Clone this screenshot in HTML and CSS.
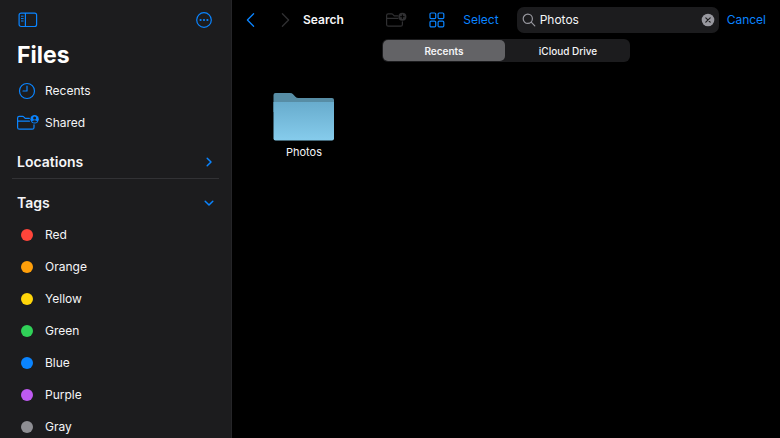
FILE: index.html
```html
<!DOCTYPE html>
<html lang="en">
<head>
<meta charset="utf-8">
<meta name="viewport" content="width=device-width, initial-scale=1">
<title>Files</title>
<link rel="stylesheet" href="styles.css">
</head>
<body>
<div class="app">
  <aside class="sidebar">
    <div class="sidebar-bar">
      <button class="icon-button" type="button" aria-label="Toggle sidebar">
        <svg width="20" height="16" viewBox="0 0 20 16" fill="none" stroke="currentColor" stroke-width="1.2"><rect x="1.1" y="1.1" width="17.5" height="13.4" rx="2"/><path d="M7.4 1v13.5"/><path d="M3 4.2h2.6M3 6.6h2.6M3 9h2.6" stroke-width="1"/></svg>
      </button>
      <button class="icon-button" type="button" aria-label="More">
        <svg width="16" height="16" viewBox="0 0 16 16" fill="none" stroke="currentColor" stroke-width="1.2"><circle cx="8" cy="8" r="7.3"/><g fill="currentColor" stroke="none"><circle cx="4.6" cy="8" r="1.1"/><circle cx="8" cy="8" r="1.1"/><circle cx="11.4" cy="8" r="1.1"/></g></svg>
      </button>
    </div>
    <h1 class="title">Files</h1>
    <nav class="places" aria-label="Places">
      <a class="row" href="#recents"><span class="row-icon">
        <svg width="18" height="18" viewBox="0 0 18 18" fill="none" stroke="currentColor" stroke-width="1.2" stroke-linecap="round" stroke-linejoin="round"><circle cx="9" cy="9" r="7.5"/><path d="M9 4.2V9H5"/></svg>
      </span>Recents</a>
      <a class="row" href="#shared"><span class="row-icon">
        <svg width="24" height="18" viewBox="0 0 24 18" fill="none" stroke="currentColor" stroke-width="1.2" stroke-linecap="round" stroke-linejoin="round"><path d="M14.4 4.3H10.2L8.8 2.8Q8.4 2.3 7.6 2.3H4.2Q2.6 2.3 2.6 3.9V13.4Q2.6 15.2 4.4 15.2H17.2Q19 15.2 19 13.4V10.8M2.6 7.2H14.4"/><circle cx="19.6" cy="5.3" r="4.2" fill="currentColor" stroke="none"/><g class="badge-cut" stroke="none"><circle cx="19.6" cy="4" r="1.5"/><path d="M17 7.7Q17.6 6.2 19.6 6.2T22.2 7.7Q21.2 8.6 19.6 8.6T17 7.7Z"/></g></svg>
      </span>Shared</a>
    </nav>
    <section class="locations">
      <button class="section-head" type="button" aria-expanded="false"><span>Locations</span>
        <svg width="12" height="12" viewBox="0 0 12 12" fill="none" stroke="currentColor" stroke-width="1.5" stroke-linecap="round" stroke-linejoin="round"><path d="M4.2 2.2 8 6 4.2 9.8"/></svg>
      </button>
    </section>
    <section class="tags">
      <button class="section-head" type="button" aria-expanded="true"><span>Tags</span>
        <svg width="12" height="12" viewBox="0 0 12 12" fill="none" stroke="currentColor" stroke-width="1.5" stroke-linecap="round" stroke-linejoin="round"><path d="M2.2 4.2 6 8l3.8-3.8"/></svg>
      </button>
      <nav aria-label="Tags">
        <a class="row" href="#red"><span class="row-icon"><i class="dot red"></i></span>Red</a>
        <a class="row" href="#orange"><span class="row-icon"><i class="dot orange"></i></span>Orange</a>
        <a class="row" href="#yellow"><span class="row-icon"><i class="dot yellow"></i></span>Yellow</a>
        <a class="row" href="#green"><span class="row-icon"><i class="dot green"></i></span>Green</a>
        <a class="row" href="#blue"><span class="row-icon"><i class="dot blue"></i></span>Blue</a>
        <a class="row" href="#purple"><span class="row-icon"><i class="dot purple"></i></span>Purple</a>
        <a class="row" href="#gray"><span class="row-icon"><i class="dot gray"></i></span>Gray</a>
      </nav>
    </section>
  </aside>
  <main class="content">
    <header class="toolbar">
      <div class="history">
        <button class="icon-button" type="button" aria-label="Back">
          <svg width="10" height="16" viewBox="0 0 10 16" fill="none" stroke="currentColor" stroke-width="1.3" stroke-linecap="round" stroke-linejoin="round"><path d="M7.6 1.8 1.4 8l6.2 6.2"/></svg>
        </button>
        <button class="icon-button" type="button" aria-label="Forward" disabled>
          <svg width="10" height="16" viewBox="0 0 10 16" fill="none" stroke="currentColor" stroke-width="1.3" stroke-linecap="round" stroke-linejoin="round"><path d="M2.4 1.8 8.6 8l-6.2 6.2"/></svg>
        </button>
      </div>
      <h2 class="page-title">Search</h2>
      <div class="actions">
        <div class="view-tools">
          <button class="icon-button" type="button" aria-label="New folder" disabled>
            <svg width="24" height="18" viewBox="0 0 24 18" fill="none" stroke="currentColor" stroke-width="1.2" stroke-linecap="round" stroke-linejoin="round"><path d="M13.8 4.8H10.2L8.8 3.4Q8.4 2.9 7.6 2.9H4.2Q2.6 2.9 2.6 4.5V13.4Q2.6 15.2 4.4 15.2H16.6Q18.4 15.2 18.4 13.4V10.8M2.6 7.4H13.8"/><circle cx="18.4" cy="5.7" r="4" fill="currentColor" stroke="none"/><path d="M18.4 3.9v3.6M16.6 5.7h3.6" stroke="#000" stroke-width="1"/></svg>
          </button>
          <button class="icon-button" type="button" aria-label="Icon view">
            <svg width="16" height="16" viewBox="0 0 16 16" fill="none" stroke="currentColor" stroke-width="1.2"><rect x="1" y="1" width="5.7" height="5.7" rx="1.1"/><rect x="9.1" y="1" width="5.7" height="5.7" rx="1.1"/><rect x="1" y="9.1" width="5.7" height="5.7" rx="1.1"/><rect x="9.1" y="9.1" width="5.7" height="5.7" rx="1.1"/></svg>
          </button>
        </div>
        <button class="text-button" type="button">Select</button>
      </div>
      <form class="search">
        <svg width="14" height="14" viewBox="0 0 14 14" fill="none" stroke="currentColor" stroke-width="1.2" stroke-linecap="round" aria-hidden="true"><circle cx="5.8" cy="5.8" r="4.6"/><path d="m9.2 9.2 3.6 3.6"/></svg>
        <input class="search-input" type="text" aria-label="Search" value="Photos">
        <button class="icon-button" type="reset" aria-label="Clear text">
          <svg width="14" height="14" viewBox="0 0 14 14"><circle cx="7" cy="7" r="6.3" fill="#98989f"/><path d="m4.8 4.8 4.4 4.4M9.2 4.8 4.8 9.2" stroke="#1c1c1e" stroke-width="1.2" stroke-linecap="round"/></svg>
        </button>
      </form>
      <button class="text-button" type="button">Cancel</button>
    </header>
    <div class="scope">
      <button class="segment selected" type="button" aria-pressed="true">Recents</button>
      <button class="segment" type="button" aria-pressed="false">iCloud Drive</button>
    </div>
    <div class="results">
      <a class="item" href="#photos">
        <svg width="62" height="50" viewBox="0 0 62 50" aria-hidden="true">
          <defs><linearGradient id="folder" x1="0" y1="0" x2="0" y2="1"><stop offset="0" stop-color="#68accd"/><stop offset="1" stop-color="#86ccec"/></linearGradient></defs>
          <path d="M.5 3Q.5 1 2.5 1H17Q19 1 20.3 2.4L22.4 4.7Q23.5 6 25.4 6H59Q61 6 61 8V20H.5Z" fill="#578da5"/>
          <path d="M.5 10H61V46.5Q61 48.5 59 48.5H2.5Q.5 48.5 .5 46.5Z" fill="url(#folder)"/>
        </svg>
        <span>Photos</span>
      </a>
    </div>
  </main>
</div>
</body>
</html>
```
FILE: styles.css
```css
* {
  box-sizing: border-box;
}

body {
  margin: 0;
  background: #000;
  color: #f5f5f7;
  font: 12px/16px Inter, "Liberation Sans", sans-serif;
}

h1, h2 {
  margin: 0;
}

a {
  color: inherit;
  text-decoration: none;
}

button {
  padding: 0;
  border: 0;
  background: none;
  color: inherit;
  font: inherit;
}

svg {
  display: block;
  flex: none;
}

.app {
  display: grid;
  grid-template-columns: 232px 1fr;
  height: 100vh;
  overflow: hidden;
}

.sidebar {
  overflow: hidden;
  border-right: 1px solid #252528;
  background: #1c1c1e;
}

.sidebar-bar {
  display: flex;
  align-items: center;
  justify-content: space-between;
  height: 39px;
  padding: 0 19px 0 18px;
}

.icon-button,
.text-button {
  color: #0a84ff;
}

.icon-button:disabled {
  color: #303032;
}

.title {
  padding: 0 17px;
  color: #fff;
  font-size: 23px;
  font-weight: 700;
  line-height: 32px;
}

.places {
  padding: 4px 0 7px;
}

.row {
  display: flex;
  align-items: center;
  gap: 6px;
  height: 32px;
  padding-left: 15px;
}

.row-icon {
  display: flex;
  justify-content: center;
  width: 24px;
  color: #0a84ff;
}

.badge-cut {
  fill: #1c1c1e;
}

.section-head {
  display: flex;
  align-items: center;
  justify-content: space-between;
  width: 100%;
  height: 32px;
  padding: 0 16px 0 17px;
  font-size: 14px;
  font-weight: 600;
}

.section-head svg {
  color: #0a84ff;
}

.locations::after {
  content: "";
  display: block;
  height: 1px;
  margin: 0 12px;
  background: #323235;
}

.tags {
  padding-top: 8px;
}

.dot {
  width: 12px;
  height: 12px;
  border-radius: 50%;
}

.red { background: #ff453a; }
.orange { background: #ff9f0a; }
.yellow { background: #ffd60a; }
.green { background: #30d158; }
.blue { background: #0a84ff; }
.purple { background: #bf5af2; }
.gray { background: #8e8e93; }

.content {
  min-width: 0;
}

.toolbar {
  display: flex;
  align-items: center;
  height: 39px;
  padding: 0 14px;
}

.history {
  display: flex;
  gap: 24px;
}

.page-title {
  margin-left: 13px;
  font-size: 12px;
  font-weight: 600;
}

.actions {
  display: flex;
  align-items: center;
  gap: 18px;
  margin-left: auto;
}

.view-tools {
  display: flex;
  align-items: center;
  gap: 21px;
}

.search {
  display: flex;
  align-items: center;
  gap: 4px;
  width: 202px;
  min-width: 0;
  height: 26px;
  margin: 0 8px 0 18px;
  padding: 0 4px 0 5px;
  border-radius: 7px;
  background: #1c1c1e;
  color: #98989f;
}

.search-input {
  flex: 1;
  width: 100%;
  min-width: 0;
  padding: 0;
  border: 0;
  outline: 0;
  background: none;
  color: #f5f5f7;
  font: inherit;
}

.scope {
  display: grid;
  grid-template-columns: 1fr 1fr;
  gap: 2px;
  width: 248px;
  max-width: 100%;
  margin: 0 auto;
  padding: 1px;
  border-radius: 6px;
  background: #1c1c1e;
}

.segment {
  height: 21px;
  border-radius: 5px;
  font-size: 10px;
  font-weight: 500;
}

.selected {
  background: #636366;
  font-weight: 600;
}

.results {
  display: flex;
  flex-wrap: wrap;
  gap: 24px;
  padding: 30px 41px;
}

.item {
  display: flex;
  flex-direction: column;
  align-items: center;
  gap: 2px;
  font-size: 11px;
}
```
